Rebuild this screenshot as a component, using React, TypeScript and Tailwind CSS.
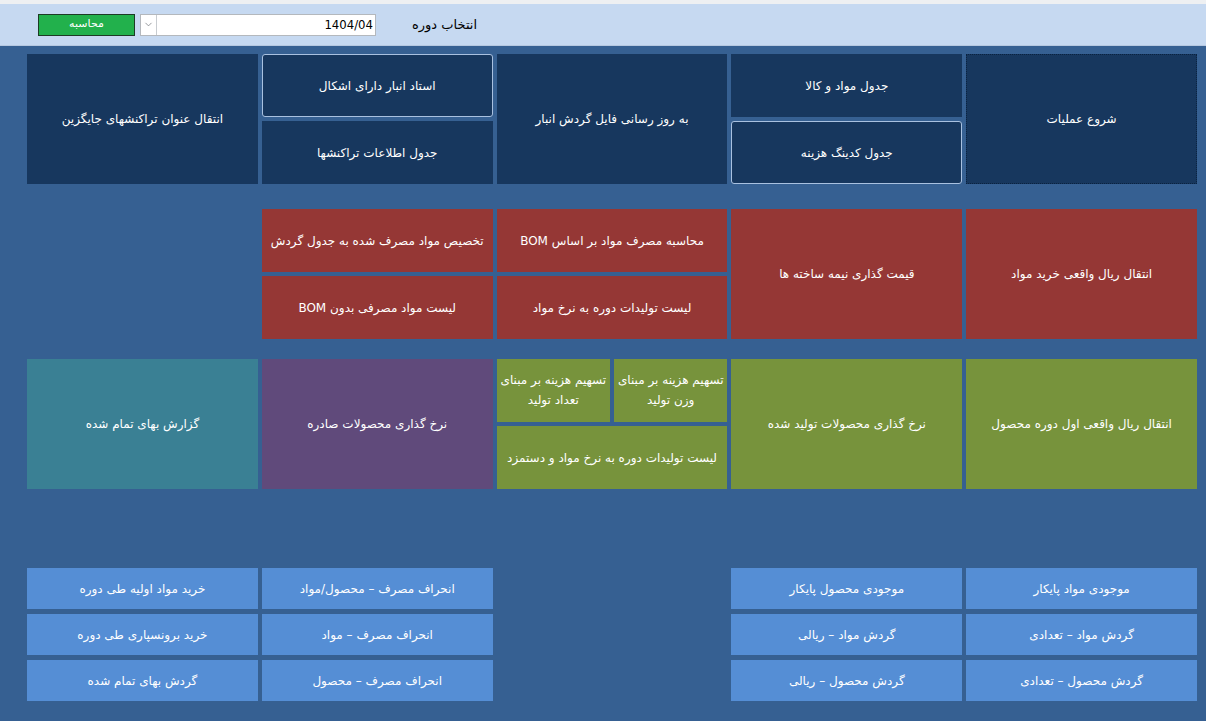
import { ChevronDown } from "lucide-react";

type Tone = "navy" | "red" | "green" | "purple" | "teal" | "blue";

const tones: Record<Tone, string> = {
  navy: "bg-[#17375e]",
  red: "bg-[#953735]",
  green: "bg-[#77933c]",
  purple: "bg-[#604a7b]",
  teal: "bg-[#3a8094]",
  blue: "bg-[#558ed5]",
};

function Tile({
  label,
  tone,
  lines,
  outlined,
  dotted,
  className = "",
}: {
  label?: string;
  tone: Tone;
  lines?: string[];
  outlined?: boolean;
  dotted?: boolean;
  className?: string;
}) {
  return (
    <button
      className={`flex flex-col items-center justify-center text-center text-white text-[12px] leading-[20px] ${tones[tone]} ${
        outlined ? "border border-[#a9c1e0] rounded-[3px]" : ""
      } ${dotted ? "border border-dotted border-[#0a2240]" : ""} ${className}`}
    >
      {lines ? lines.map((l) => <span key={l}>{l}</span>) : label}
    </button>
  );
}

function Stack({ children }: { children: React.ReactNode }) {
  return <div className="grid grid-rows-2 gap-[4px]">{children}</div>;
}

export default function App() {
  return (
    <div
      className="min-h-[721px] w-[1206px] bg-[#366092]"
      style={{ fontFamily: '"DejaVu Sans", "Noto Sans", sans-serif' }}
    >
      {/* header */}
      <div className="h-[4px] bg-[#eef0f2]" />
      <div className="h-[42px] bg-[#c6d9f1] flex items-center pl-[38px] border-b border-[#b6c8e0]">
        <button className="w-[97px] h-[22px] bg-[#22b14c] border border-[#1d3b25] text-white text-[11px]">
          محاسبه
        </button>
        <div className="ml-[5px] w-[236px] h-[22px] bg-white border border-[#b4b8bd] flex items-center">
          <div className="w-[16px] h-full border-r border-[#c8ccd0] flex items-center justify-center text-[#6b6f74]">
            <ChevronDown size={11} strokeWidth={1.5} />
          </div>
          <div
            className="flex-1 text-right pr-[2px] text-[13px] text-black"
            style={{ fontFamily: '"DejaVu Sans Condensed", "DejaVu Sans", sans-serif' }}
          >
            1404/04
          </div>
        </div>
        <div dir="rtl" className="ml-[36px] text-[13px] text-black">
          انتخاب دوره
        </div>
      </div>

      <div dir="rtl" className="pt-[8px] pr-[9px]">
        <div className="w-[1170px]">
          {/* row 1 */}
          <div className="grid grid-cols-5 gap-x-[4px] h-[130px]">
            <Tile tone="navy" label="شروع عملیات" dotted />
            <Stack>
              <Tile tone="navy" label="جدول مواد و کالا" />
              <Tile tone="navy" label="جدول کدینگ هزینه" outlined />
            </Stack>
            <Tile tone="navy" label="به روز رسانی فایل گردش انبار" />
            <Stack>
              <Tile tone="navy" label="استاد انبار دارای اشکال" outlined />
              <Tile tone="navy" label="جدول اطلاعات تراکنشها" />
            </Stack>
            <Tile tone="navy" label="انتقال عنوان تراکنشهای جایگزین" />
          </div>

          {/* row 2 */}
          <div className="grid grid-cols-5 gap-x-[4px] h-[130px] mt-[25px]">
            <Tile tone="red" label="انتقال ریال واقعی خرید مواد" />
            <Tile tone="red" label="قیمت گذاری نیمه ساخته ها" />
            <Stack>
              <Tile tone="red" label="محاسبه مصرف مواد بر اساس BOM" />
              <Tile tone="red" label="لیست تولیدات دوره به نرخ مواد" />
            </Stack>
            <Stack>
              <Tile tone="red" label="تخصیص مواد مصرف شده به جدول گردش" />
              <Tile tone="red" label="لیست مواد مصرفی بدون BOM" />
            </Stack>
            <div />
          </div>

          {/* row 3 */}
          <div className="grid grid-cols-5 gap-x-[4px] h-[130px] mt-[20px]">
            <Tile tone="green" label="انتقال ریال واقعی اول دوره محصول" />
            <Tile tone="green" label="نرخ گذاری محصولات تولید شده" />
            <Stack>
              <div className="grid grid-cols-2 gap-x-[4px]">
                <Tile tone="green" lines={["تسهیم هزینه بر مبنای", "وزن تولید"]} className="pb-[2px]" />
                <Tile tone="green" lines={["تسهیم هزینه بر مبنای", "تعداد تولید"]} className="pb-[2px]" />
              </div>
              <Tile tone="green" label="لیست تولیدات دوره به نرخ مواد و دستمزد" />
            </Stack>
            <Tile tone="purple" label="نرخ گذاری محصولات صادره" />
            <Tile tone="teal" label="گزارش بهای تمام شده" />
          </div>

          {/* row 4 */}
          <div className="grid grid-cols-5 grid-rows-3 gap-x-[4px] gap-y-[5px] mt-[79px] h-[133px]">
            <Tile tone="blue" label="موجودی مواد پایکار" />
            <Tile tone="blue" label="موجودی محصول پایکار" />
            <div />
            <Tile tone="blue" label="انحراف مصرف – محصول/مواد" />
            <Tile tone="blue" label="خرید مواد  اولیه طی دوره" />

            <Tile tone="blue" label="گردش مواد – تعدادی" />
            <Tile tone="blue" label="گردش مواد – ریالی" />
            <div />
            <Tile tone="blue" label="انحراف مصرف – مواد" />
            <Tile tone="blue" label="خرید برونسپاری طی دوره" />

            <Tile tone="blue" label="گردش محصول – تعدادی" />
            <Tile tone="blue" label="گردش محصول – ریالی" />
            <div />
            <Tile tone="blue" label="انحراف مصرف – محصول" />
            <Tile tone="blue" label="گردش بهای تمام شده" />
          </div>
        </div>
      </div>
    </div>
  );
}
